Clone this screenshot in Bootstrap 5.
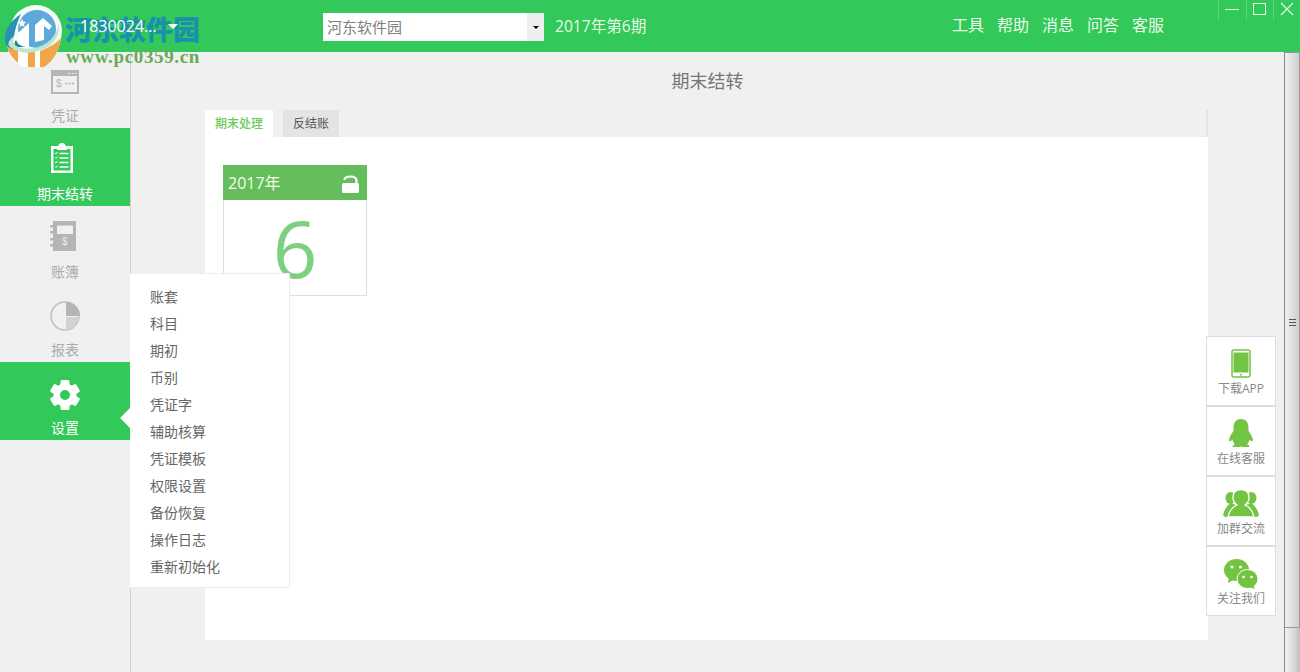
<!DOCTYPE html>
<html lang="zh-CN">
<head>
<meta charset="utf-8">
<title>期末结转</title>
<link href="https://cdn.jsdelivr.net/npm/bootstrap@5.3.0/dist/css/bootstrap.min.css" rel="stylesheet">
<style>
html,body{height:672px;overflow:hidden}
body{font-family:"Open Sans","Noto Sans CJK SC",sans-serif;background:#f0f0f0;color:#666;position:relative}
.topbar{height:52px;background:#32c85a;color:#eafbe9}
.acct{width:323px;padding-left:80px;font-size:16px;color:#fff;height:52px;position:relative;z-index:5}
.caret-w{width:0;height:0;border-left:5px solid transparent;border-right:5px solid transparent;border-top:5px solid #fff;margin-left:11px}
.pick{width:221px;height:28px;margin-top:2px;background:#fff;font-size:15px;color:#808080;padding-left:4px;line-height:28px}
.pick-btn{width:17px;height:28px;background:#eee}
.pick-tri{width:0;height:0;border-left:3px solid transparent;border-right:3px solid transparent;border-top:3px solid #000}
.period{font-size:15.600px;margin-left:11px;color:#e8fbe2;padding-top:2px}
.tools{font-size:16px;gap:13px;margin-left:auto;margin-right:136px;padding-bottom:3px}
.tools span{width:32px;text-align:center}
.winctl{position:absolute;top:0;left:1218px;width:82px;height:20px}
.winctl>div{width:28px;height:20px;border-left:1px solid #5fd680;padding-bottom:2px}
.winctl>div:first-child{width:29px}
.body-row{height:620px}
.sidebar{width:131px;border-right:1px solid #cfcfcf;flex:none}
.navit{height:78px;color:#aaa;font-size:14px;padding-bottom:2px;position:relative}
.navit:first-child{height:76px}
.navit svg{margin-bottom:10px;display:block}
.navit svg.ic-doc{margin-bottom:11px}
.navit svg.ic-clip{margin-bottom:9px;margin-right:6px}
.navit svg.ic-book{margin-right:4px}
.navit svg.ic-pie{margin-bottom:8px}
.navit svg.ic-gear{margin-bottom:7px}
.navit.on{background:#32c85a;color:#fff}
.arrow{position:absolute;right:0;top:46px;width:10px;height:20px;overflow:hidden}
.arrow::before{content:"";position:absolute;left:3px;top:3px;width:14px;height:14px;background:#fff;transform:rotate(45deg)}
.mainp{width:1153px;flex:none}
.ptitle{font-size:18px;color:#777;text-align:center;height:58px;line-height:58px}
.tabsb{height:27px;margin-left:74px;width:1003px;border-right:2px solid #e4e4e4;gap:10px}
.tabx{height:27px;font-size:12px;line-height:28px;text-align:center}
.tabx.act{width:68px;background:#fff;color:#6ec85a;font-weight:500}
.tabx.oth{width:56px;background:#e4e4e4;color:#555}
.sheet{margin-left:74px;width:1003px;height:503px;background:#fff;padding:28px 18px}
.ycard{width:144px;height:131px;border:1px solid #ddd;border-top:0}
.yhead{height:35px;background:#65bd5c;color:#f2fce9;font-size:16px;margin:0 -1px;padding:0 7px 0 5px}
.yhead svg{margin-top:2px}
.ynum{font-size:78px;line-height:96px;color:#7dd07d;text-align:center}
.setmenu{position:absolute;left:130px;top:273px;width:160px;height:315px;background:#fff;border:1px solid #eee;border-left:0;padding:9px 0 0 20px;font-size:14px;color:#666}
.setmenu div{height:27px;line-height:27px}
.floaty{position:absolute;left:1206px;top:336px;width:70px}
.fcell{width:70px;height:70px;background:#fff;border:1px solid #ddd;font-size:12px;color:#888;white-space:nowrap;padding-top:12px}
.fcell svg{display:block;margin-bottom:2px;flex:none}
.fcell svg.ic-chat{margin-bottom:1px}
.sbar{width:16px;flex:none;border-left:1px solid #888;background:linear-gradient(90deg,#f2f2f2,#d4d4d6 70%,#bbb);position:relative}
.sbar-thumb{height:576px;border:1px solid #999;border-left:0;background:linear-gradient(90deg,#f0f0f0,#cfcfd3);padding-bottom:36px}
.grip{width:7px;height:7px;border-top:1px solid #555;border-bottom:1px solid #555;position:relative}
.grip::after{content:"";position:absolute;left:0;right:0;top:2px;height:1px;background:#555}
.wmark{position:absolute;left:0;top:0;width:210px;height:70px}
.wmark svg{position:absolute;left:0;top:0}
.wmark-a{position:absolute;left:65px;top:11px;font-family:"Noto Sans CJK SC",serif;font-weight:900;font-size:27px;line-height:36px;color:rgba(20,130,195,.8);white-space:nowrap}
.wmark-b{position:absolute;left:66px;top:46px;font-family:"Liberation Serif",serif;font-weight:700;font-size:19px;line-height:22px;color:#6aab55;white-space:nowrap;letter-spacing:.65px}
</style>
</head>
<body>
<header class="topbar d-flex align-items-center">
  <div class="acct d-flex align-items-center"><span>1830024...</span><i class="caret-w"></i></div>
  <div class="pick d-flex justify-content-between align-items-center"><span>河东软件园</span><span class="pick-btn d-flex align-items-center justify-content-center"><i class="pick-tri"></i></span></div>
  <div class="period">2017年第6期</div>
  <div class="tools d-flex"><span>工具</span><span>帮助</span><span>消息</span><span>问答</span><span>客服</span></div>
</header>
<div class="winctl d-flex">
  <div class="d-flex align-items-center justify-content-center"><svg width="14" height="14" viewBox="0 0 14 14"><path d="M0 7.500H14" stroke="#eafbe9"/></svg></div>
  <div class="d-flex align-items-center justify-content-center"><svg width="14" height="14" viewBox="0 0 14 14"><rect x=".5" y="1.500" width="12" height="11" fill="none" stroke="#eafbe9"/></svg></div>
  <div class="d-flex align-items-center justify-content-center"><svg width="14" height="14" viewBox="0 0 14 14"><path d="M1 1L13 13M13 1L1 13" stroke="#eafbe9" stroke-width="1.100"/></svg></div>
</div>
<div class="body-row d-flex">
  <nav class="sidebar d-flex flex-column">
    <div class="navit d-flex flex-column align-items-center justify-content-end">
      <svg class="ic-doc" width="28" height="24" viewBox="0 0 28 24"><rect x="1" y="1" width="26" height="22" fill="none" stroke="#b5b5b5" stroke-width="2"/><path d="M1 1H27V6H1Z" fill="#b5b5b5"/><path d="M17 3.500h2M20.500 3.500h2M24 3.500h1.500" stroke="#eee"/><text x="5" y="17" font-size="10" fill="#b5b5b5" font-family="Liberation Sans">$</text><path d="M14 13.500h2M17.500 13.500h2M21 13.500h2" stroke="#b5b5b5" stroke-width="1.500"/></svg>
      <span>凭证</span>
    </div>
    <div class="navit on d-flex flex-column align-items-center justify-content-end">
      <svg class="ic-clip" width="24" height="31" viewBox="0 0 24 31"><path fill-rule="evenodd" d="M1 3H8.500a3.500 3 0 0 1 7 0H23V30H1ZM3.500 6V27.500H20.500V6Z" fill="#fff"/><rect x="7" y="3" width="10" height="4" fill="#fff"/><path d="M9.500 10.500H18.500M9.500 15H18.500M9.500 19.500H18.500M9.500 24H18.500" stroke="#fff" stroke-width="1.500"/><path d="M5 10l1 1 1.500-2M5 14.500l1 1 1.500-2M5 19l1 1 1.500-2M5 23.500l1 1 1.500-2" fill="none" stroke="#fff"/></svg>
      <span>期末结转</span>
    </div>
    <div class="navit d-flex flex-column align-items-center justify-content-end">
      <svg class="ic-book" width="26" height="30" viewBox="0 0 26 30"><path fill-rule="evenodd" d="M3 1Q3 0 4 0H26V30H4Q3 30 3 29ZM7 5V13H23V5Q23 4.500 22 4.500H8Q7 4.500 7 5Z" fill="#b5b5b5"/><rect x="0" y="4" width="4" height="2.500" rx="1" fill="#b5b5b5"/><rect x="0" y="10" width="4" height="2.500" rx="1" fill="#b5b5b5"/><rect x="0" y="17" width="4" height="2.500" rx="1" fill="#b5b5b5"/><rect x="0" y="23" width="4" height="2.500" rx="1" fill="#b5b5b5"/><text x="12" y="24" font-size="10" fill="#eee" font-family="Liberation Sans">$</text></svg>
      <span>账簿</span>
    </div>
    <div class="navit d-flex flex-column align-items-center justify-content-end">
      <svg class="ic-pie" width="30" height="30" viewBox="0 0 30 30"><circle cx="15" cy="15" r="14" fill="none" stroke="#c0c0c0" stroke-width="1.500"/><path d="M16 1A14 14 0 0 1 30 15H16Z" fill="#b5b5b5"/><path d="M16 16H29A14 14 0 0 1 16 29Z" fill="#d2d2d2"/></svg>
      <span>报表</span>
    </div>
    <div class="navit on d-flex flex-column align-items-center justify-content-end">
      <svg class="ic-gear" width="30" height="30" viewBox="0 0 30 30"><g fill="#fff"><circle cx="15" cy="15" r="11.500"/><rect x="10.500" y="0" width="9" height="30" rx="1.500"/><rect x="10.500" y="0" width="9" height="30" rx="1.500" transform="rotate(60 15 15)"/><rect x="10.500" y="0" width="9" height="30" rx="1.500" transform="rotate(120 15 15)"/></g><circle cx="15" cy="15" r="5" fill="#32c85a"/></svg>
      <span>设置</span>
      <i class="arrow"></i>
    </div>
  </nav>
  <main class="mainp">
    <div class="ptitle">期末结转</div>
    <div class="tabsb d-flex"><div class="tabx act">期末处理</div><div class="tabx oth">反结账</div></div>
    <div class="sheet">
      <div class="ycard">
        <div class="yhead d-flex align-items-center justify-content-between"><span>2017年</span>
          <svg width="18" height="18" viewBox="0 0 18 18"><rect x="0" y="8" width="17" height="10" rx="1.500" fill="#fff"/><path d="M2.500 5V4.500Q3 1.500 8.500 1.500T14.500 5.500V8" fill="none" stroke="#fff" stroke-width="2.200"/></svg></div>
        <div class="ynum">6</div>
      </div>
    </div>
  </main>
  <div class="sbar">
    <div class="sbar-thumb d-flex align-items-center justify-content-center"><i class="grip"></i></div>
  </div>
</div>
<div class="setmenu">
  <div>账套</div><div>科目</div><div>期初</div><div>币别</div><div>凭证字</div><div>辅助核算</div><div>凭证模板</div><div>权限设置</div><div>备份恢复</div><div>操作日志</div><div>重新初始化</div>
</div>
<aside class="floaty d-flex flex-column">
  <div class="fcell d-flex flex-column align-items-center">
    <svg width="20" height="29" viewBox="0 0 20 29"><rect x="1" y="1" width="18" height="27" rx="2" fill="none" stroke="#72c442" stroke-width="1.500"/><rect x="2.500" y="3.500" width="15" height="20" fill="#72c442"/><circle cx="10" cy="25.700" r="1" fill="#72c442"/></svg>
    <span>下载APP</span></div>
  <div class="fcell d-flex flex-column align-items-center">
    <svg width="28" height="29" viewBox="0 0 28 29"><path d="M14 0C8.500 0 6.500 4 6.500 9V12C4 15 2 19 2 21.500 3 23 5 21.500 5.500 20.500 6 23 7 24.500 8 25.500 6 26 5 27 6 28H12.500L14 27.500 15.500 28H22C23 27 22 26 20 25.500 21 24.500 22 23 22.500 20.500 23 21.500 25 23 26 21.500 26 19 24 15 21.500 12V9C21.500 4 19.500 0 14 0Z" fill="#72c442"/></svg>
    <span>在线客服</span></div>
  <div class="fcell d-flex flex-column align-items-center">
    <svg width="36" height="29" viewBox="0 0 36 29"><g fill="#72c442"><ellipse cx="7.500" cy="9" rx="5" ry="6"/><ellipse cx="28.500" cy="9" rx="5" ry="6"/><path d="M0 26Q2 18 7.500 14L13 16 6 28H2Z"/><path d="M36 26Q34 18 28.500 14L23 16 30 28H34Z"/></g><g fill="#72c442" stroke="#fff" stroke-width="1.300"><path d="M5 28Q7 19 14 16 10 13 10 8.500 10 .7 18 .7T26 8.500Q26 13 22 16 29 19 31 28Z"/></g></svg>
    <span>加群交流</span></div>
  <div class="fcell d-flex flex-column align-items-center">
    <svg class="ic-chat" width="34" height="30" viewBox="0 0 34 30"><ellipse cx="12.500" cy="11" rx="12.500" ry="11" fill="#72c442"/><path d="M5 18L4 24 11 20Z" fill="#72c442"/><ellipse cx="23.500" cy="20" rx="10.500" ry="9.500" fill="#72c442" stroke="#fff"/><path d="M29 26L31 30 25 28Z" fill="#72c442"/><circle cx="8" cy="8" r="1.600" fill="#fff"/><circle cx="16.500" cy="8" r="1.600" fill="#fff"/><circle cx="19.500" cy="18" r="1.300" fill="#fff"/><circle cx="27.500" cy="18" r="1.300" fill="#fff"/></svg>
    <span>关注我们</span></div>
</aside>
<div class="wmark">
  <svg width="70" height="70" viewBox="0 0 70 70">
    <circle cx="36" cy="31" r="26" fill="#fff" fill-opacity=".95"/>
    <path d="M7 45Q9 60 22 67H44Q58 58 61 38L50 46 28 52Z" fill="#fff"/>
    <path d="M7 45Q9 56 18 63V50ZM28 52V67H35V52ZM40 51V67H44Q58 58 61 38Q54 46 40 51Z" fill="#f2a64a"/>
    <path d="M21 14Q3 26 5 42 7 50 18 49 10 44 14 36 16 24 21 14Z" fill="#2c8fb4"/>
    <circle cx="37" cy="29" r="19" fill="#5ea8dc"/>
    <path d="M18 44V33L29 23V47Z" fill="#fff"/>
    <path d="M35 42V25L43 18 52 26 49 30 44 26V40Z" fill="#fff"/>
    <path d="M14 36Q10 44 18 47 34 52 48 42 56 36 59 24 60 40 46 48 26 58 10 47 5 43 14 36Z" fill="#bfe6cf"/>
    <path d="M16 40Q18 46 26 47H18Q12 45 16 40Z" fill="#1f8a9e"/>
    <path d="M22 19l1.200 2.500 2.800.4-2 2 .5 2.800-2.500-1.300-2.500 1.300.5-2.800-2-2 2.800-.4z" fill="#fff"/>
  </svg>
  <div class="wmark-a">河东软件园</div>
  <div class="wmark-b">www.pc0359.cn</div>
</div>
<script src="https://cdn.jsdelivr.net/npm/bootstrap@5.3.0/dist/js/bootstrap.bundle.min.js"></script>
</body>
</html>
